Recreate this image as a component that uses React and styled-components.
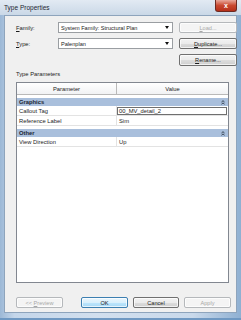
import React from 'react'
import styled, { createGlobalStyle } from 'styled-components'

const GlobalStyle = createGlobalStyle`
  html, body { margin: 0; padding: 0; }
  body {
    width: 241px;
    height: 320px;
    overflow: hidden;
    font-family: "Liberation Sans", Arial, sans-serif;
    color: #1b1b1b;
  }
`

const Window = styled.div`
  width: 241px;
  height: 320px;
  box-sizing: border-box;
  display: flex;
  flex-direction: column;
  padding-bottom: 5px;
  background: linear-gradient(to right, #9cb8d6 0%, #c4d6ea 6%, #d2dfee 40%, #c9d9eb 80%, #8fb0d2 100%);
  border-bottom: 2px solid #6f98c2;
`

const TitleBar = styled.div`
  height: 15px;
  flex: none;
  display: flex;
  align-items: center;
  justify-content: space-between;
  padding: 0 4px;
  background: linear-gradient(to bottom, #e2eaf3, #cad8e7);
`

const Title = styled.span`
  font-size: 6.5px;
  color: #1d2733;
`

const CloseButton = styled.div`
  width: 20px;
  height: 11px;
  margin-top: -4px;
  border: 1px solid #6d2a22;
  border-top: none;
  border-radius: 0 0 3px 3px;
  background: linear-gradient(to bottom, #e9a89b, #c9482f 50%, #b52f1a);
  color: #fff;
  font-size: 7px;
  font-weight: bold;
  display: flex;
  align-items: center;
  justify-content: center;
`

const Body = styled.div`
  flex: 1;
  margin: 0 4px;
  background: #f0f0f0;
  border: 1px solid #8ea4bc;
  padding: 6px 6px 0 11px;
  display: flex;
  flex-direction: column;
`

const TopGrid = styled.div`
  display: grid;
  grid-template-columns: 36px 115px 58px;
  grid-template-rows: 11px 11px 12px;
  column-gap: 6px;
  row-gap: 5px;
  align-items: center;
`

const Label = styled.span`
  font-size: 5.8px;
  color: #1b1b1b;
`

const Combo = styled.div`
  height: 11px;
  box-sizing: border-box;
  background: #fff;
  border: 1px solid #9a9ea2;
  display: flex;
  align-items: center;
  justify-content: space-between;
  padding: 0 3px 0 2px;
  font-size: 5.6px;
`

const Arrow = styled.span`
  width: 0;
  height: 0;
  border-left: 2.5px solid transparent;
  border-right: 2.5px solid transparent;
  border-top: 3px solid #111;
`

const Button = styled.div`
  width: ${p => (p.$w ? `${p.$w}px` : 'auto')};
  height: ${p => p.$h || 11}px;
  box-sizing: border-box;
  border: 1px solid ${p => (p.$disabled ? '#b5b8bb' : p.$default ? '#3c7fb1' : '#707070')};
  border-radius: 2px;
  background: ${p =>
    p.$disabled
      ? '#f4f4f4'
      : p.$default
      ? 'linear-gradient(to bottom, #eaf6fd 0%, #d9f0fc 50%, #bee6fd 51%, #a7d9f5 100%)'
      : 'linear-gradient(to bottom, #f2f2f2 0%, #ebebeb 50%, #dddddd 51%, #cfcfcf 100%)'};
  color: ${p => (p.$disabled ? '#a8a8a8' : '#1b1b1b')};
  font-size: 5.6px;
  display: flex;
  align-items: center;
  justify-content: center;
  box-shadow: inset 0 0 0 1px rgba(255, 255, 255, 0.7);
  white-space: pre;
`

const Section = styled.div`
  margin-top: 4px;
  font-size: 5.8px;
  line-height: 8px;
`

const Table = styled.div`
  margin-top: 4px;
  width: 213px;
  height: 201px;
  box-sizing: border-box;
  border: 1px solid #828790;
  background: #fff;
  display: flex;
  flex-direction: column;
`

const HeaderRow = styled.div`
  height: 11px;
  flex: none;
  display: grid;
  grid-template-columns: 100px 1fr;
  border-bottom: 1px solid #b9b9b9;
  background: linear-gradient(to bottom, #ffffff, #f1f2f4);
`

const HeaderCell = styled.div`
  font-size: 5.8px;
  display: flex;
  align-items: center;
  justify-content: center;
  border-right: ${p => (p.$last ? 'none' : '1px solid #b9b9b9')};
`

const GroupRow = styled.div`
  height: 8px;
  flex: none;
  margin-top: ${p => p.$gap}px;
  background: #a9bfdc;
  display: flex;
  align-items: center;
  justify-content: space-between;
  padding: 0 3px 0 2px;
  font-size: 5.8px;
  font-weight: bold;
  color: #1a2430;
`

const DataRow = styled.div`
  height: 10px;
  flex: none;
  display: grid;
  grid-template-columns: 100px 1fr;
  border-bottom: 1px solid #e3e3e3;
  box-sizing: border-box;
`

const Cell = styled.div`
  font-size: 5.8px;
  display: flex;
  align-items: center;
  padding-left: 2px;
  border-right: ${p => (p.$first ? '1px solid #e3e3e3' : 'none')};
  ${p =>
    p.$editing &&
    `
    border: 1px solid #6f6f6f;
    margin: 1px 1px 0 0;
    padding-left: 1px;
  `}
`

const Footer = styled.div`
  margin-top: 14px;
  display: flex;
  justify-content: space-between;
  width: 215px;
`

const ButtonGroup = styled.div`
  display: flex;
  gap: 5px;
`

const Chevron = () => (
  <svg width="4" height="5" viewBox="0 0 4 5">
    <path d="M0.5 2 L2 0.7 L3.5 2 M0.5 4.2 L2 2.9 L3.5 4.2" fill="none" stroke="#1a2430" strokeWidth="0.8" />
  </svg>
)

const groups = [
  {
    name: 'Graphics',
    gap: 3,
    rows: [
      { param: 'Callout Tag', value: '00_MV_detail_2', editing: true },
      { param: 'Reference Label', value: 'Sim' },
    ],
  },
  {
    name: 'Other',
    gap: 3,
    rows: [{ param: 'View Direction', value: 'Up' }],
  },
]

export default function App() {
  return (
    <>
      <GlobalStyle />
      <Window>
        <TitleBar>
          <Title>Type Properties</Title>
          <CloseButton>x</CloseButton>
        </TitleBar>
        <Body>
          <TopGrid>
            <Label><u>F</u>amily:</Label>
            <Combo>System Family: Structural Plan<Arrow /></Combo>
            <Button $disabled><span><u>L</u>oad...</span></Button>
            <Label><u>T</u>ype:</Label>
            <Combo>Palenplan<Arrow /></Combo>
            <Button><span><u>D</u>uplicate...</span></Button>
            <span />
            <span />
            <Button $h={12}><span><u>R</u>ename...</span></Button>
          </TopGrid>
          <Section>Type Parameters</Section>
          <Table>
            <HeaderRow>
              <HeaderCell>Parameter</HeaderCell>
              <HeaderCell $last>Value</HeaderCell>
            </HeaderRow>
            {groups.map(g => (
              <React.Fragment key={g.name}>
                <GroupRow $gap={g.gap}>
                  {g.name}
                  <Chevron />
                </GroupRow>
                {g.rows.map(r => (
                  <DataRow key={r.param}>
                    <Cell $first>{r.param}</Cell>
                    <Cell $editing={r.editing}>{r.value}</Cell>
                  </DataRow>
                ))}
              </React.Fragment>
            ))}
          </Table>
          <Footer>
            <Button $disabled $w={47}><span>&lt;&lt; <u>P</u>review</span></Button>
            <ButtonGroup>
              <Button $default $w={47}>OK</Button>
              <Button $w={46}>Cancel</Button>
              <Button $disabled $w={47}>Apply</Button>
            </ButtonGroup>
          </Footer>
        </Body>
      </Window>
    </>
  )
}
